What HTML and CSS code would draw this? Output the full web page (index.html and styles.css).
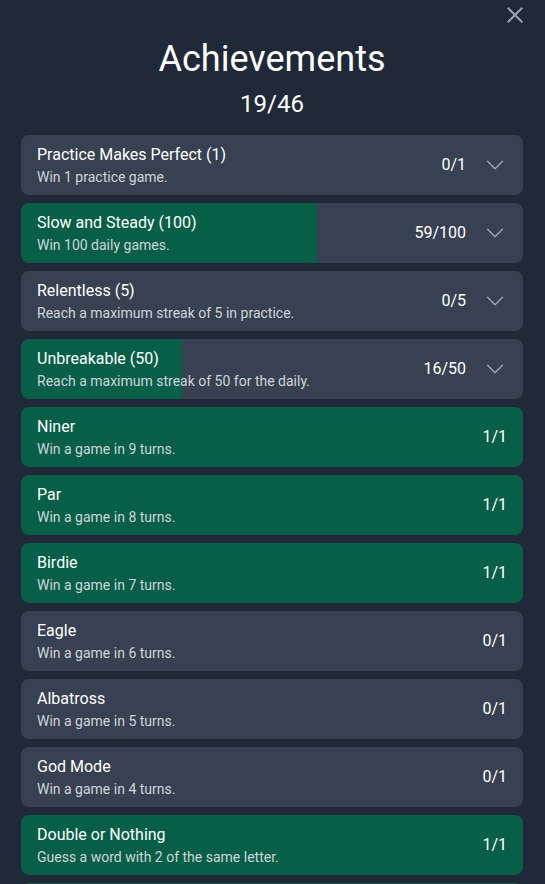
FILE: index.html
```html
<!DOCTYPE html>
<html lang="en">
<head>
<meta charset="utf-8">
<title>Achievements</title>
<link rel="stylesheet" href="styles.css">
</head>
<body>
<div class="modal">
  <button class="close" aria-label="Close">
    <svg width="16" height="16" viewBox="0 0 16 16" fill="none" stroke="currentColor" stroke-width="2" stroke-linecap="square"><path d="M1.5 1.5L14.5 14.5M14.5 1.5L1.5 14.5"/></svg>
  </button>
  <h1 class="title">Achievements</h1>
  <div class="total">19/46</div>
  <ul class="list">
    <li class="card">
      <div class="info"><div class="name">Practice Makes Perfect (1)</div><div class="desc">Win 1 practice game.</div></div>
      <div class="count">0/1</div>
      <svg class="chev" width="24" height="24" viewBox="0 0 24 24" fill="none" stroke="currentColor" stroke-width="1.5" stroke-linecap="round" stroke-linejoin="round"><path d="M19.5 8.25l-7.5 7.5-7.5-7.5"/></svg>
    </li>
    <li class="card">
      <div class="fill" style="width:59%"></div>
      <div class="info"><div class="name">Slow and Steady (100)</div><div class="desc">Win 100 daily games.</div></div>
      <div class="count">59/100</div>
      <svg class="chev" width="24" height="24" viewBox="0 0 24 24" fill="none" stroke="currentColor" stroke-width="1.5" stroke-linecap="round" stroke-linejoin="round"><path d="M19.5 8.25l-7.5 7.5-7.5-7.5"/></svg>
    </li>
    <li class="card">
      <div class="info"><div class="name">Relentless (5)</div><div class="desc">Reach a maximum streak of 5 in practice.</div></div>
      <div class="count">0/5</div>
      <svg class="chev" width="24" height="24" viewBox="0 0 24 24" fill="none" stroke="currentColor" stroke-width="1.5" stroke-linecap="round" stroke-linejoin="round"><path d="M19.5 8.25l-7.5 7.5-7.5-7.5"/></svg>
    </li>
    <li class="card">
      <div class="fill" style="width:32%"></div>
      <div class="info"><div class="name">Unbreakable (50)</div><div class="desc">Reach a maximum streak of 50 for the daily.</div></div>
      <div class="count">16/50</div>
      <svg class="chev" width="24" height="24" viewBox="0 0 24 24" fill="none" stroke="currentColor" stroke-width="1.5" stroke-linecap="round" stroke-linejoin="round"><path d="M19.5 8.25l-7.5 7.5-7.5-7.5"/></svg>
    </li>
    <li class="card done">
      <div class="info"><div class="name">Niner</div><div class="desc">Win a game in 9 turns.</div></div>
      <div class="count">1/1</div>
    </li>
    <li class="card done">
      <div class="info"><div class="name">Par</div><div class="desc">Win a game in 8 turns.</div></div>
      <div class="count">1/1</div>
    </li>
    <li class="card done">
      <div class="info"><div class="name">Birdie</div><div class="desc">Win a game in 7 turns.</div></div>
      <div class="count">1/1</div>
    </li>
    <li class="card">
      <div class="info"><div class="name">Eagle</div><div class="desc">Win a game in 6 turns.</div></div>
      <div class="count">0/1</div>
    </li>
    <li class="card">
      <div class="info"><div class="name">Albatross</div><div class="desc">Win a game in 5 turns.</div></div>
      <div class="count">0/1</div>
    </li>
    <li class="card">
      <div class="info"><div class="name">God Mode</div><div class="desc">Win a game in 4 turns.</div></div>
      <div class="count">0/1</div>
    </li>
    <li class="card done">
      <div class="info"><div class="name">Double or Nothing</div><div class="desc">Guess a word with 2 of the same letter.</div></div>
      <div class="count">1/1</div>
    </li>
    <li class="card done" aria-hidden="true"></li>
  </ul>
</div>
</body>
</html>
```
FILE: styles.css
```css
* { box-sizing: border-box; }
html, body {
  margin: 0;
  padding: 0;
  background: #1f2937;
  height: 884px;
  overflow: hidden;
}
body {
  font-family: Roboto, "Liberation Sans", sans-serif;
  color: #ffffff;
}
.modal {
  position: relative;
  padding: 39px 22px 0 21px;
}
.close {
  position: absolute;
  top: 7px;
  right: 22px;
  width: 16px;
  height: 16px;
  padding: 0;
  border: 0;
  background: none;
  color: #9ca3af;
  display: flex;
}
.title {
  margin: 0;
  font-size: 36px;
  line-height: 40px;
  font-weight: 400;
  text-align: center;
}
.total {
  margin-top: 9px;
  font-size: 24px;
  line-height: 32px;
  text-align: center;
}
.list {
  list-style: none;
  margin: 15px 0 0;
  padding: 0;
  display: flex;
  flex-direction: column;
  gap: 8px;
}
.card {
  position: relative;
  overflow: hidden;
  display: flex;
  align-items: center;
  gap: 17px;
  height: 60px;
  flex: none;
  padding: 8px 16px;
  border-radius: 8px;
  background: #374151;
}
.card.done { background: #065f46; }
.fill {
  position: absolute;
  left: 0;
  top: 0;
  bottom: 0;
  background: #065f46;
}
.info {
  position: relative;
  flex: 1;
  min-width: 0;
}
.name {
  font-size: 16px;
  line-height: 24px;
}
.desc {
  font-size: 14px;
  line-height: 20px;
  color: #d1d5db;
}
.count {
  position: relative;
  font-size: 16px;
  line-height: 24px;
}
.chev {
  position: relative;
  color: #9ca3af;
  flex: none;
}
```
